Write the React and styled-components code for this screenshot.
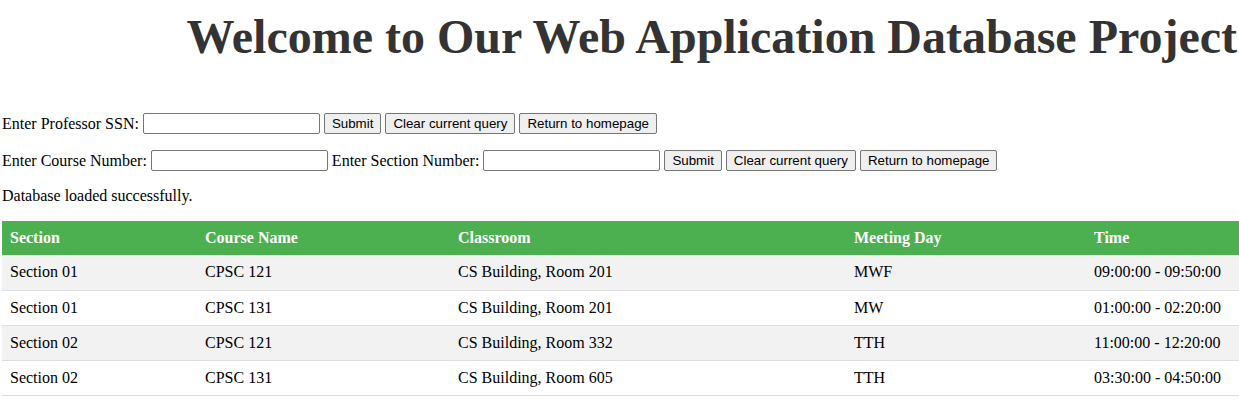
import React from 'react';
import styled, { createGlobalStyle } from 'styled-components';

const GlobalStyle = createGlobalStyle`
  body {
    margin: 0;
    padding: 0 0 0 2px;
    font-family: "Liberation Serif", "Times New Roman", serif;
    font-size: 16px;
    color: #000;
    background: #fff;
  }
`;

const Title = styled.h1`
  margin: 10px 2px 0 0;
  text-align: right;
  font-size: 48px;
  font-weight: bold;
  color: #333;
  line-height: 53px;
`;

const FormRow = styled.p`
  margin: 16px 0;
  line-height: 21px;
  height: 21px;
  &:first-of-type {
    margin-top: 50px;
  }
`;

const TextInput = styled.input`
  box-sizing: border-box;
  width: 177px;
  height: 21px;
  margin: 0;
  padding: 1px 2px;
  border: 1px solid #767676;
  border-radius: 2px;
  font-family: "Liberation Sans", Arial, sans-serif;
  font-size: 13.33px;
  vertical-align: top;
`;

const Button = styled.button`
  box-sizing: border-box;
  height: 21px;
  margin: 0;
  padding: 1px 7px;
  background: #efefef;
  border: 1px solid #767676;
  border-radius: 2px;
  font-family: "Liberation Sans", Arial, sans-serif;
  font-size: 13.33px;
  color: #000;
  vertical-align: top;
`;

const Status = styled.p`
  margin: 16px 0;
  line-height: 18px;
`;

const Table = styled.table`
  width: 1237px;
  border-collapse: collapse;
  table-layout: fixed;
`;

const Th = styled.th`
  background: #4caf50;
  color: #fff;
  text-align: left;
  font-weight: bold;
  padding: 8px;
  height: 34px;
  box-sizing: border-box;
`;

const Tr = styled.tr`
  background: ${p => (p.$shaded ? '#f2f2f2' : '#fff')};
`;

const Td = styled.td`
  padding: 8px;
  height: 35px;
  box-sizing: border-box;
  border-bottom: 1px solid #ddd;
`;

const columns = [
  { label: 'Section', width: 195 },
  { label: 'Course Name', width: 253 },
  { label: 'Classroom', width: 396 },
  { label: 'Meeting Day', width: 240 },
  { label: 'Time', width: 153 },
];

const rows = [
  ['Section 01', 'CPSC 121', 'CS Building, Room 201', 'MWF', '09:00:00 - 09:50:00'],
  ['Section 01', 'CPSC 131', 'CS Building, Room 201', 'MW', '01:00:00 - 02:20:00'],
  ['Section 02', 'CPSC 121', 'CS Building, Room 332', 'TTH', '11:00:00 - 12:20:00'],
  ['Section 02', 'CPSC 131', 'CS Building, Room 605', 'TTH', '03:30:00 - 04:50:00'],
];

const App = () => (
  <>
    <GlobalStyle />
    <Title>Welcome to Our Web Application Database Project</Title>

    <FormRow>
      Enter Professor SSN: <TextInput type="text" />{' '}
      <Button>Submit</Button> <Button>Clear current query</Button>{' '}
      <Button>Return to homepage</Button>
    </FormRow>

    <FormRow>
      Enter Course Number: <TextInput type="text" /> Enter Section Number:{' '}
      <TextInput type="text" /> <Button>Submit</Button>{' '}
      <Button>Clear current query</Button> <Button>Return to homepage</Button>
    </FormRow>

    <Status>Database loaded successfully.</Status>

    <Table>
      <colgroup>
        {columns.map(c => (
          <col key={c.label} style={{ width: c.width }} />
        ))}
      </colgroup>
      <thead>
        <tr>
          {columns.map(c => (
            <Th key={c.label}>{c.label}</Th>
          ))}
        </tr>
      </thead>
      <tbody>
        {rows.map((r, i) => (
          <Tr key={i} $shaded={i % 2 === 0}>
            {r.map((cell, j) => (
              <Td key={j}>{cell}</Td>
            ))}
          </Tr>
        ))}
      </tbody>
    </Table>
  </>
);

export default App;
